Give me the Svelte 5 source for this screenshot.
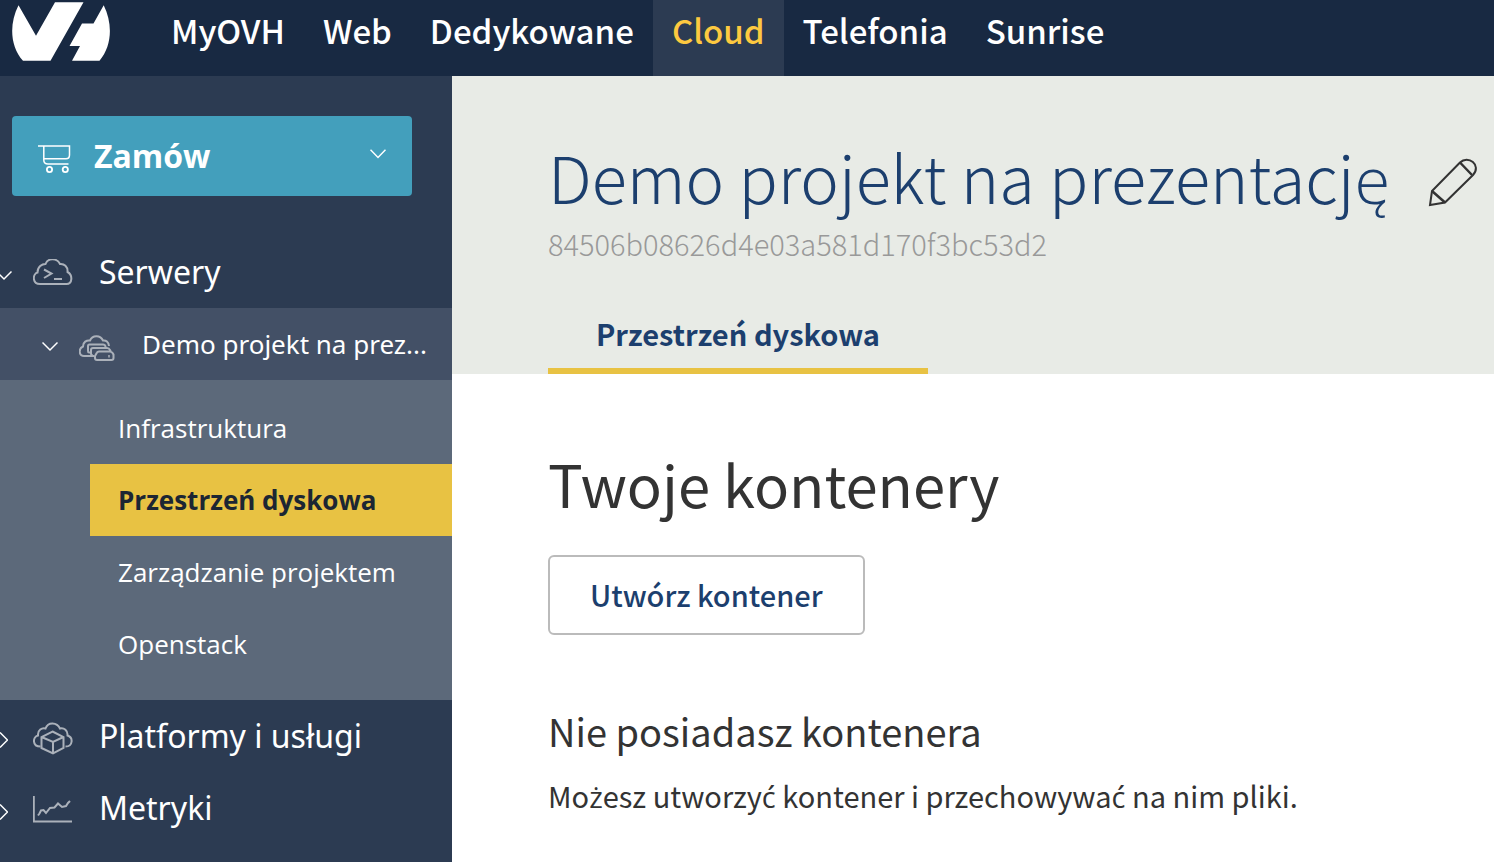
<script>
  const nav = ['MyOVH', 'Web', 'Dedykowane', 'Cloud', 'Telefonia', 'Sunrise'];
  const activeNav = 'Cloud';
  const projectPages = ['Infrastruktura', 'Przestrzeń dyskowa', 'Zarządzanie projektem', 'Openstack'];
  const activePage = 'Przestrzeń dyskowa';
  const hint = 'Możesz utworzyć kontener i przechowywać na nim pliki.';
  const hintParts = hint.split(/([żć])/);
</script>

<div class="app">
  <header class="topbar">
    <a class="logo" href="#home" aria-label="OVH">
      <svg viewBox="0 0 98 60" width="98" height="60">
        <path fill="#fff" d="M6.500 3.300 24 33.800 43 .2H71.500L38.500 58.800H11C-2 44-3 22 6.500 3.300ZM91.700 3.300C101 22 100 44 87.500 58.800H60L68 44H57.500L70 21.500H81.500Z" />
      </svg>
    </a>
    <nav class="mainnav">
      {#each nav as item}
        <a href="#{item}" class:active={item === activeNav}>{item}</a>
      {/each}
    </nav>
  </header>

  <div class="body">
    <aside class="sidebar">
      <button class="order" type="button">
        <svg class="cart" viewBox="0 0 34 30" width="34" height="30" fill="none" stroke="#fff" stroke-width="1.5">
          <path d="M0 2H31.500V11Q31.500 14.800 28 14.800H6M5.800 2V16Q5.800 20 10 20H30.500" />
          <circle cx="11.500" cy="25.500" r="2.600" stroke-width="1.800" /><circle cx="27.300" cy="25.500" r="2.600" stroke-width="1.800" />
        </svg>
        <span>Zamów</span>
        <svg class="caret" viewBox="0 0 16 10" width="16" height="10" fill="none" stroke="#fff" stroke-width="1.500"><path d="m.5.8 7.500 7.700L15.500.8" /></svg>
      </button>

      <ul class="tree">
        <li>
          <a class="root" href="#serwery">
            <svg class="arrow open" viewBox="0 0 16 16" width="16" height="16"><path d="m.5 4.500 7.500 7.500 7.500-7.500" /></svg>
            <svg class="icon" viewBox="0 0 40 30" width="40" height="30">
              <path d="M7 25C-1 25-.5 15 4.500 13.500 4.500 7.500 9 5 12.500 5 15-1.500 24-1 27 5 31 4.500 35 7.500 34.500 13 40 16 39.500 25 33.500 25Z" />
              <path d="m11 10.500 7.500 4-7.500 4.500M21 20H29" />
            </svg>
            <span>Serwery</span>
          </a>
          <a class="project" href="#projekt">
            <svg class="arrow" viewBox="0 0 16 16" width="16" height="16"><path d="m.5 4.500 7.500 7.500 7.500-7.500" /></svg>
            <svg class="icon" viewBox="0 0 36 30" width="36" height="30">
              <path d="M15 22H5C-.5 22-.5 14 4 12.500 4 8 7.500 6 11 6.500 13.500.5 21.500 1 24 6.500 27 6 29.500 8 30 12" />
              <path d="M11 18.500H10Q9 18.500 9 17V12Q9 10.500 10.500 10.500H24Q26 10.500 26.500 12.500L27 14M14 21.500Q12 21.500 12 19.500V16Q12 14 14 14H28Q30 14 31 16L32 18M16 22 18 18.500Q18.500 17.500 20 17.500H31Q33 17.500 34.500 20.500V24Q34.500 26 32.500 26H18Q16 26 16 24Z" />
              <path stroke-width="1.500" d="M30 21V23.500" />
            </svg>
            <span>Demo projekt na prez...</span>
          </a>
          <ul class="pages">
            {#each projectPages as page}
              <li><a href="#{page}" class:active={page === activePage}>{page}</a></li>
            {/each}
          </ul>
        </li>
        <li>
          <a class="root" href="#platformy">
            <svg class="arrow" viewBox="0 0 16 16" width="16" height="16"><path d="m8 .5 7.500 7.500L8 15.500" /></svg>
            <svg class="icon" viewBox="0 0 40 34" width="40" height="34">
              <path d="M7.500 25.500C-1 25.500-.5 16 5 14.500 4.500 9 9 6.500 12.500 7.500 15 .5 24 1 27 7.500 31 6.500 35 9.500 34.500 14.500 40.500 16.500 40 25.500 32.500 25.500" />
              <path d="m19.500 10.500 11 5.500v11L20 32.500 8.500 27v-11ZM8.500 16 20 21 30.500 16M20 21V32.500" />
            </svg>
            <span>Platformy i usługi</span>
          </a>
        </li>
        <li>
          <a class="root" href="#metryki">
            <svg class="arrow" viewBox="0 0 16 16" width="16" height="16"><path d="m8 .5 7.500 7.500L8 15.500" /></svg>
            <svg class="icon" viewBox="0 0 40 28" width="40" height="28">
              <path d="M.8 0V25.500H39M5 19.500 6.500 17.500 8 14.500 10.500 14 13 17 17 12 21.500 11.500 25 7.500 29 11 33 10 35 7 37 5" />
            </svg>
            <span>Metryki</span>
          </a>
        </li>
      </ul>
    </aside>

    <main>
      <section class="hero">
        <div class="title">
          <h1>Demo projekt na prezentację</h1>
          <button class="edit" type="button" aria-label="Edytuj">
            <svg viewBox="0 0 50 50" width="50" height="50" fill="none" stroke="#333" stroke-width="2">
              <path d="M2 48 4 34 32 5.500C40-2.500 54 8 45 18L17 45.500Z" /><path stroke-width="2.500" d="M4 34 17 45.500M32 5.500 44 18" />
            </svg>
          </button>
        </div>
        <p class="id">84506b08626d4e03a581d170f3bc53d2</p>
        <nav class="tabs"><a href="#dysk">Przestrzeń dyskowa</a></nav>
      </section>

      <section class="content">
        <h2>Twoje kontenery</h2>
        <button class="create" type="button">Utwórz kontener</button>
        <h3>Nie posiadasz kontenera</h3>
        <p>{#each hintParts as part, i}{#if i % 2}<span class="accented">{part}</span>{:else}{part}{/if}{/each}</p>
      </section>
    </main>
  </div>
</div>

<style>
  :global(body) { margin: 0; background: #fff; }
  * { box-sizing: border-box; }
  .app {
    min-height: 100vh;
    display: flex;
    flex-direction: column;
    overflow: hidden;
    font-family: "Noto Sans CJK SC", "Open Sans", sans-serif;
    color: #333;
  }
  a { color: inherit; text-decoration: none; }
  button { font: inherit; cursor: pointer; }
  ul { list-style: none; margin: 0; padding: 0; }
  h1, h2, h3, p { margin: 0; }
  svg { flex: none; display: block; }

  .topbar { display: flex; height: 76px; background: #182942; color: #fff; }
  .logo { padding: 2px 42px 0 12px; }
  .mainnav { display: flex; }
  .mainnav a {
    padding: 6px 19px 0;
    font-size: 33px;
    line-height: 48px;
    font-weight: 500;
  }
  .mainnav a.active { background: #2c3b52; color: #fdc940; }

  .body { display: flex; flex: 1; }
  .sidebar {
    flex: none;
    width: 452px;
    background: #2c3b52;
    color: #fff;
    font-family: "Noto Sans", sans-serif;
  }
  .order {
    display: flex;
    align-items: center;
    width: 400px;
    height: 80px;
    margin: 40px 12px;
    padding: 0 26px;
    border: 0;
    border-radius: 4px;
    background: #439fbc;
    color: #fff;
    font-family: "Open Sans", sans-serif;
    font-size: 32px;
    font-weight: 700;
  }
  .order span { flex: 1; margin-left: 22px; padding-bottom: 2px; text-align: left; }
  .cart { margin-top: 6px; }
  .caret { margin-top: -4px; }
  .root, .project { display: flex; align-items: center; height: 72px; }
  .root { padding-right: 20px; font-size: 32px; }
  .root span { padding-bottom: 2px; }
  .arrow { fill: none; stroke: #fff; stroke-width: 1.5; }
  .icon { fill: none; stroke: #abb1ba; stroke-width: 2; }
  .root .arrow { margin-left: -8px; margin-top: 8px; }
  .root .arrow.open { margin-left: -4px; margin-right: -4px; margin-top: 6px; }
  .root .icon { margin: 4px 26px 0 25px; }
  .project {
    padding: 0 20px 0 42px;
    background: #435066;
    font-size: 26px;
    white-space: nowrap;
  }
  .project .arrow { margin-top: 4px; }
  .project .icon { margin: 10px 27px 0 21px; }
  .pages {
    padding: 12px 0 20px 90px;
    background: #5c697a;
    font-family: "Open Sans", sans-serif;
    font-size: 26px;
    line-height: 72px;
  }
  .pages a { display: block; padding-left: 28px; }
  .pages a.active { background: #e8c243; color: #1c2633; font-weight: 700; }

  main { flex: 1; min-width: 0; }
  .hero { padding: 52px 16px 0 96px; background: #e8ebe6; color: #1c3f6e; }
  .title { display: flex; align-items: center; justify-content: space-between; height: 96px; }
  h1 { font-size: 65px; line-height: 96px; font-weight: 300; white-space: nowrap; }
  .edit { margin-top: 12px; padding: 0; border: 0; background: none; }
  .id { padding-top: 1px; font-size: 29px; line-height: 36px; font-weight: 300; color: #999; }
  .tabs { display: flex; padding-top: 42px; }
  .tabs a {
    width: 380px;
    padding: 11px 48px 16px;
    border-bottom: 6px solid #e8c243;
    font-size: 29px;
    line-height: 38px;
    font-weight: 700;
    white-space: nowrap;
  }
  .content { padding: 65px 16px 40px 96px; }
  h2 { font-size: 58px; line-height: 88px; font-weight: 400; }
  .create {
    height: 80px;
    margin: 28px 0 66px;
    padding: 0 40px 2px;
    border: 2px solid #bbb;
    border-radius: 6px;
    background: #fff;
    color: #1c3f6e;
    font-size: 29px;
    font-weight: 500;
  }
  h3 { font-size: 38px; line-height: 60px; font-weight: 400; }
  .content p { padding-top: 12px; font-size: 29px; line-height: 44px; }
  .accented { font-family: "Open Sans", sans-serif; }
</style>
